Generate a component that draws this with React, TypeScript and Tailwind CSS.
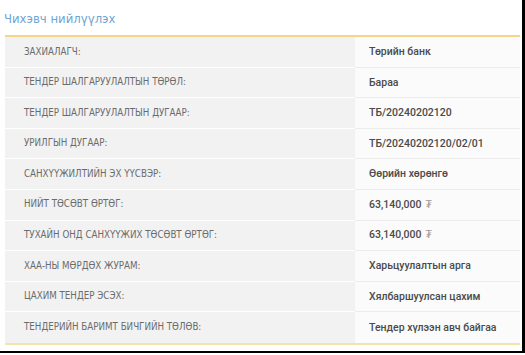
import React from "react";

const rows: [string, string][] = [
  ["ЗАХИАЛАГЧ:", "Төрийн банк"],
  ["ТЕНДЕР ШАЛГАРУУЛАЛТЫН ТӨРӨЛ:", "Бараа"],
  ["ТЕНДЕР ШАЛГАРУУЛАЛТЫН ДУГААР:", "ТБ/20240202120"],
  ["УРИЛГЫН ДУГААР:", "ТБ/20240202120/02/01"],
  ["САНХҮҮЖИЛТИЙН ЭХ ҮҮСВЭР:", "Өөрийн хөрөнгө"],
  ["НИЙТ ТӨСӨВТ ӨРТӨГ:", "63,140,000"],
  ["ТУХАЙН ОНД САНХҮҮЖИХ ТӨСӨВТ ӨРТӨГ:", "63,140,000"],
  ["ХАА-НЫ МӨРДӨХ ЖУРАМ:", "Харьцуулалтын арга"],
  ["ЦАХИМ ТЕНДЕР ЭСЭХ:", "Хялбаршуулсан цахим"],
  ["ТЕНДЕРИЙН БАРИМТ БИЧГИЙН ТӨЛӨВ:", "Тендер хүлээн авч байгаа"],
];

export default function App() {
  return (
    <div className="w-[525px] h-[355px] bg-white overflow-hidden">
      <div className="h-[353px] border-r-[3px] border-b-[2px] border-black pl-[5px] pr-[2px]">
        <div className="h-[35px] pt-[9px] -ml-[1px] text-[13px] font-medium text-[#6ea6d3] font-['DejaVu_Sans_Condensed',sans-serif]">
          Чихэвч нийлүүлэх
        </div>
        <div className="border-t-2 border-b-2 border-t-[#f3d68a] border-b-[#f6e2ab]">
          {rows.map(([label, value], i) => (
            <div key={i} className="grid grid-cols-[350px_1fr] h-[30.6px]">
              <div
                className={`bg-[#f2f2f2] flex items-center pl-[19px] text-[9.7px] text-[#6b6b6b] font-['DejaVu_Sans_Condensed',sans-serif] ${
                  i < rows.length - 1 ? "border-b border-white" : ""
                }`}
              >
                {label}
              </div>
              <div
                className={`bg-[#fbfbfb] flex items-center pl-[14px] text-[10.5px] font-medium text-[#4a4a4a] font-['Roboto',sans-serif] ${
                  i < rows.length - 1 ? "border-b border-[#ececec]" : ""
                }`}
              >
                {value}
                {(i === 5 || i === 6) && (
                  <span className="ml-[4px] font-normal text-[#9a9a9a]">₮</span>
                )}
              </div>
            </div>
          ))}
        </div>
      </div>
    </div>
  );
}
